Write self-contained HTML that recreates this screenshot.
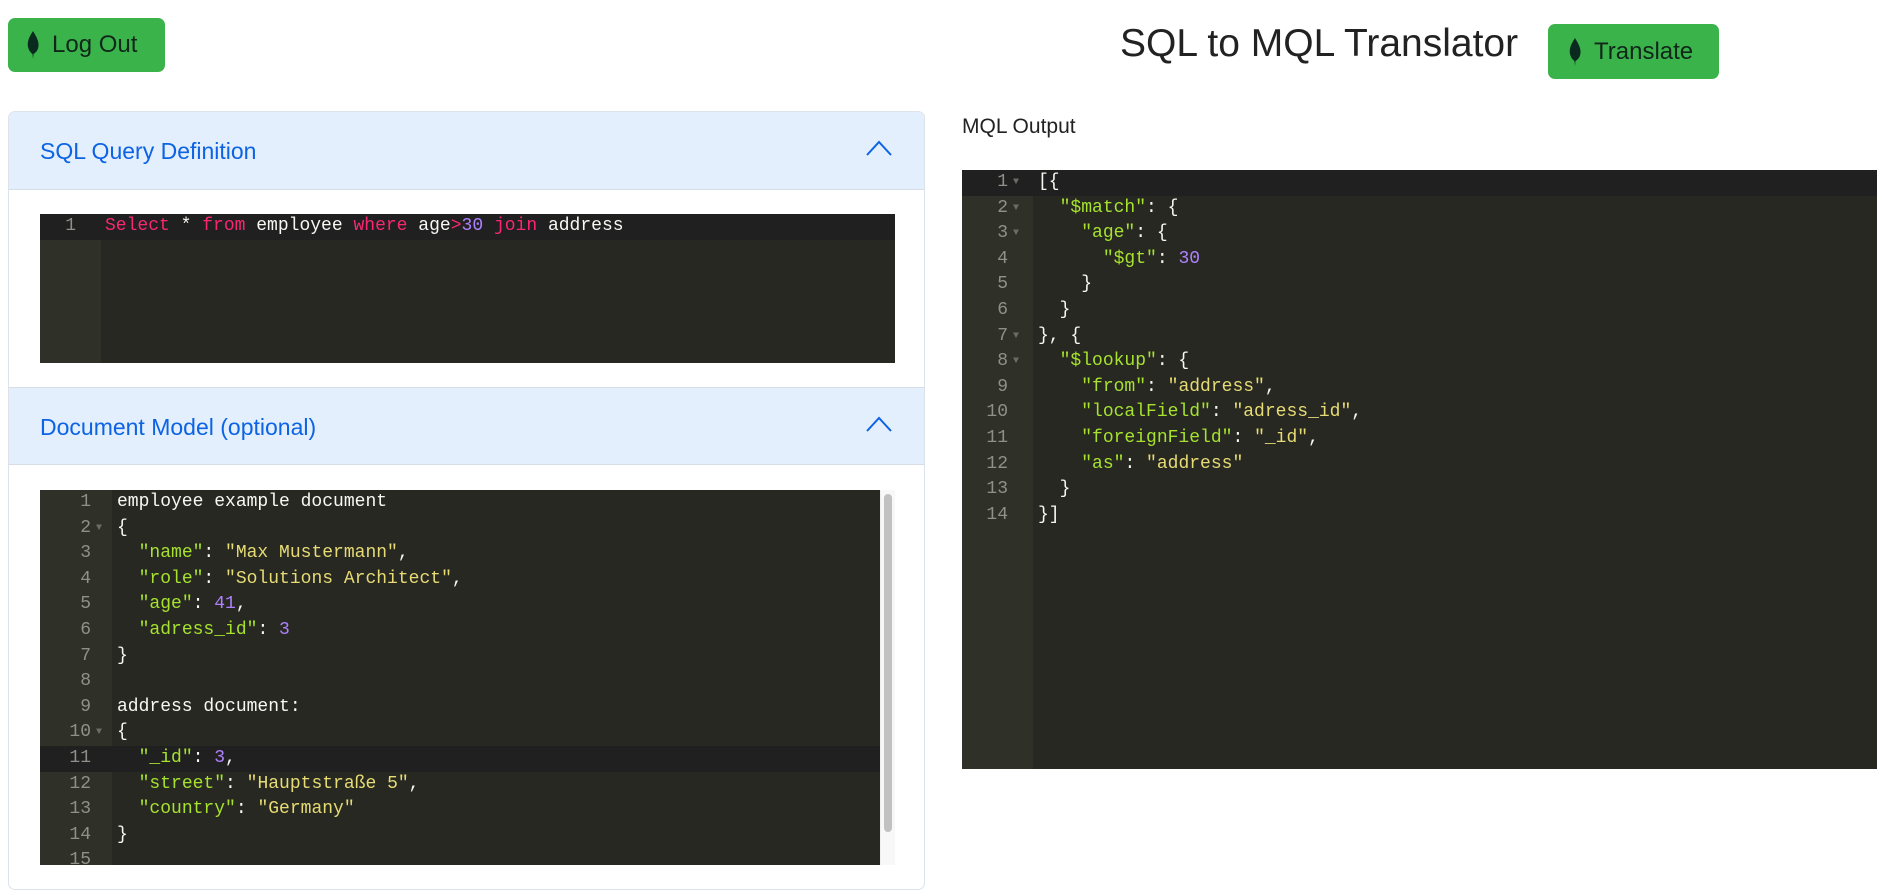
<!DOCTYPE html>
<html><head><meta charset="utf-8"><style>
*{box-sizing:border-box;margin:0;padding:0}
body{width:1885px;height:891px;background:#fff;font-family:"Liberation Sans",sans-serif;position:relative;overflow:hidden}
.btn{position:absolute;background:#3bb34b;border-radius:7px;color:#10271a;font-size:24px;display:flex;align-items:center}
.btn svg{margin-right:12px}
.title{position:absolute;left:1120px;top:22px;font-size:39px;color:#222}
.card{position:absolute;left:8px;top:111px;width:917px;height:779px;border:1px solid #dde3ea;border-radius:7px;overflow:hidden}
.hdr{position:absolute;left:0;width:100%;height:78px;background:#e3effd;border-bottom:1px solid #d6dde6;color:#0c63e4;font-size:23px;padding-left:31px;line-height:78px}
.hdr svg{position:absolute;right:32px;top:28px}
.ed{position:absolute;background:#272822;font-family:"Liberation Mono",monospace;font-size:18px;color:#f8f8f2;overflow:hidden}
.gut{position:absolute;left:0;top:0;bottom:0;background:#2f3129}
.ln{position:absolute;left:0;height:25.6px;line-height:25.6px;white-space:pre;width:100%}
.num{position:absolute;color:#8f908a;text-align:right;white-space:pre}
.act{background:#202020}
.k{color:#f92672}.n{color:#ae81ff}.s{color:#e6db74}.v{color:#a6e22e}
.fold{position:absolute;color:#6b6c66;font-size:10px}
</style></head><body>
<div class="btn" style="left:8px;top:18px;width:157px;height:54px;padding-left:18px">
<svg width="14" height="30" viewBox="0 0 14 30"><path d="M7 1C3 7 1 12 2 17c1 4 3 6 4.5 7L7 29l.5-5C9 23 12 21 12.5 16 13 11 10 6 7 1z" fill="#0b2a1f"/></svg>Log Out</div>
<div class="title">SQL to MQL Translator</div>
<div class="btn" style="left:1548px;top:24px;width:171px;height:55px;padding-left:20px">
<svg width="14" height="30" viewBox="0 0 14 30"><path d="M7 1C3 7 1 12 2 17c1 4 3 6 4.5 7L7 29l.5-5C9 23 12 21 12.5 16 13 11 10 6 7 1z" fill="#0b2a1f"/></svg>Translate</div>

<div class="card">
<div class="hdr" style="top:0">SQL Query Definition<svg width="26" height="16" viewBox="0 0 26 16"><path d="M1 15L13 2l12 13" fill="none" stroke="#0c63e4" stroke-width="2"/></svg></div>
<div class="ed" style="left:31px;top:102px;width:855px;height:149px">
<div class="gut" style="width:61px"></div>
<div class="ln act" style="top:0"><span class="num" style="left:0;width:36px;background:#272727"></span></div>
<div class="ln" style="top:0;left:0"><span class="num" style="left:0;width:36px">1</span><span style="position:absolute;left:65px"><span class="k">Select</span> * <span class="k">from</span> employee <span class="k">where</span> age<span class="k">&gt;</span><span class="n">30</span> <span class="k">join</span> address</span></div>
</div>
<div class="hdr" style="top:275px;border-top:1px solid #d6dde6">Document Model (optional)<svg width="26" height="16" viewBox="0 0 26 16"><path d="M1 15L13 2l12 13" fill="none" stroke="#0c63e4" stroke-width="2"/></svg></div>
<div class="ed" style="left:31px;top:378px;width:855px;height:375px">
<div class="gut" style="width:72px"></div>
<div class="ln act" style="top:256px"></div>
<div id="doc"></div>
<div style="position:absolute;right:0;top:0;width:15px;height:100%;background:#f8f8f8;border-left:1px solid #eee"></div>
<div style="position:absolute;right:3px;top:4px;width:8px;height:338px;background:#c1c1c1;border-radius:4px"></div>
</div>
</div>

<div style="position:absolute;left:962px;top:115px;font-size:21px;color:#222">MQL Output</div>
<div class="ed" style="left:962px;top:170px;width:915px;height:599px">
<div class="gut" style="width:71px"></div>
<div class="ln act" style="top:0"></div>
<div id="mql"></div>
</div>

<script>
function render(id,lines,gw,numRight,folds){
 var h='';
 lines.forEach(function(t,i){
  h+='<div class="ln" style="top:'+(i*25.6)+'px"><span class="num" style="left:0;width:'+numRight+'px">'+(i+1)+'</span>'+
   (folds.indexOf(i+1)>=0?'<span class="fold" style="left:'+(numRight+5)+'px">▼</span>':'')+
   '<span style="position:absolute;left:'+(gw+5)+'px">'+t+'</span></div>';
 });
 document.getElementById(id).innerHTML=h;
}
var q='&quot;';
function v(x){return '<span class="v">'+q+x+q+'</span>'}
function s(x){return '<span class="s">'+q+x+q+'</span>'}
function n(x){return '<span class="n">'+x+'</span>'}
render('doc',[
'employee example document','{',
'  '+v('name')+': '+s('Max Mustermann')+',',
'  '+v('role')+': '+s('Solutions Architect')+',',
'  '+v('age')+': '+n('41')+',',
'  '+v('adress_id')+': '+n('3'),
'}','','address document:','{',
'  '+v('_id')+': '+n('3')+',',
'  '+v('street')+': '+s('Hauptstraße 5')+',',
'  '+v('country')+': '+s('Germany'),
'}',''],72,51,[2,10]);
render('mql',[
'[{',
'  '+v('$match')+': {',
'    '+v('age')+': {',
'      '+v('$gt')+': '+n('30'),
'    }','  }','}, {',
'  '+v('$lookup')+': {',
'    '+v('from')+': '+s('address')+',',
'    '+v('localField')+': '+s('adress_id')+',',
'    '+v('foreignField')+': '+s('_id')+',',
'    '+v('as')+': '+s('address'),
'  }','}]'],71,46,[1,2,3,7,8]);
</script>
</body></html>
